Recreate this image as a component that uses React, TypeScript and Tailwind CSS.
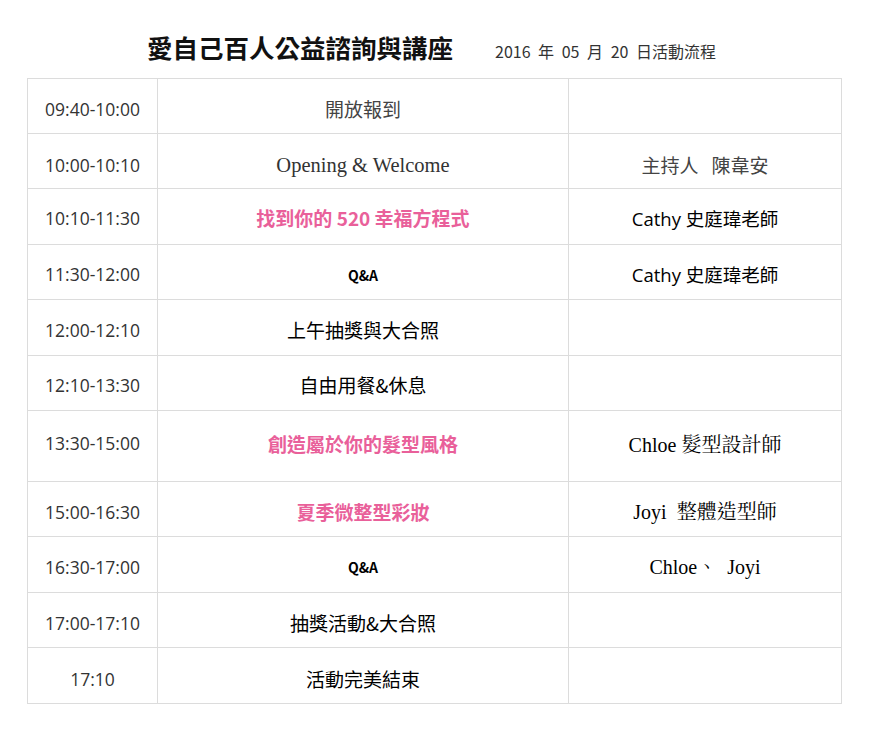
const sans = "font-['Open_Sans','Noto_Sans_CJK_TC',sans-serif]";
const serif = "font-['Liberation_Serif','Noto_Serif_CJK_TC','Noto_Sans_CJK_TC',serif]";
const cjk = "font-['Noto_Sans_CJK_TC',sans-serif]";

type Row = {
  time: string;
  h: string;
  item: React.ReactNode;
  who?: React.ReactNode;
};

const pink = `${cjk} font-bold text-[#e9609a] text-[19px]`;
const plain = `${cjk} text-[19px] text-black`;
const qa = `${cjk} font-bold text-[14px] text-black`;

const rows: Row[] = [
  { time: '09:40-10:00', h: 'h-[55px] pt-[6px]', item: <span className={`${cjk} text-[19px] text-[#444]`}>開放報到</span> },
  {
    time: '10:00-10:10',
    h: 'h-[55px] pt-[8px]',
    item: <span className={`${serif} text-[20.5px] text-[#333]`}>Opening &amp; Welcome</span>,
    who: <span className={`${cjk} text-[19px] text-[#444]`}>主持人&nbsp;&nbsp;&nbsp;陳韋安</span>,
  },
  {
    time: '10:10-11:30',
    h: 'h-[56px] pt-[4px]',
    item: <span className={pink}>找到你的 520 幸福方程式</span>,
    who: <span className={`${sans} text-[18.5px] text-black`}>Cathy 史庭瑋老師</span>,
  },
  {
    time: '11:30-12:00',
    h: 'h-[55px] pt-[5px]',
    item: <span className={qa}>Q&amp;A</span>,
    who: <span className={`${sans} text-[18.5px] text-black`}>Cathy 史庭瑋老師</span>,
  },
  { time: '12:00-12:10', h: 'h-[56px] pt-[5px]', item: <span className={plain}>上午抽獎與大合照</span> },
  { time: '12:10-13:30', h: 'h-[55px] pt-[5px]', item: <span className={plain}>自由用餐&amp;休息</span> },
  {
    time: '13:30-15:00',
    h: 'h-[71px] align-top pt-[19px]',
    item: <span className={pink}>創造屬於你的髮型風格</span>,
    who: <span className={`${serif} text-[20px] text-black`}>Chloe 髮型設計師</span>,
  },
  {
    time: '15:00-16:30',
    h: 'h-[55px] pt-[6px]',
    item: <span className={pink}>夏季微整型彩妝</span>,
    who: <span className={`${serif} text-[20px] text-black`}>Joyi&nbsp;&nbsp;整體造型師</span>,
  },
  {
    time: '16:30-17:00',
    h: 'h-[56px] pt-[5px]',
    item: <span className={qa}>Q&amp;A</span>,
    who: <span className={`${serif} text-[20px] text-black`}>Chloe、&nbsp;&nbsp;Joyi</span>,
  },
  { time: '17:00-17:10', h: 'h-[55px] pt-[6px]', item: <span className={plain}>抽獎活動&amp;大合照</span> },
  { time: '17:10', h: 'h-[56px] pt-[7px]', item: <span className={plain}>活動完美結束</span> },
];

export default function App() {
  return (
    <div className="min-h-screen bg-white pt-[34px] pl-[27px]">
      {/* Title */}
      <div className="flex items-baseline h-[44px] pl-[120px]">
        <h1 className={`${cjk} font-bold text-[25.5px] text-[#111] leading-none`}>愛自己百人公益諮詢與講座</h1>
        <span className={`${cjk} ml-[42px] text-[16px] text-[#333] leading-none [word-spacing:4px]`}>
          2016 年 05 月 20 日活動流程
        </span>
      </div>

      {/* Schedule */}
      <table className="border-collapse w-[814px] table-fixed">
        <colgroup>
          <col className="w-[130px]" />
          <col className="w-[411px]" />
          <col className="w-[273px]" />
        </colgroup>
        <tbody>
          {rows.map((r) => (
            <tr key={r.time + r.h}>
              <td className={`border border-[#dcdcdc] text-center ${r.h} ${sans} text-[17.5px] text-[#333]`}>
                {r.time}
              </td>
              <td className={`border border-[#dcdcdc] text-center ${r.h}`}>{r.item}</td>
              <td className={`border border-[#dcdcdc] text-center ${r.h}`}>{r.who}</td>
            </tr>
          ))}
        </tbody>
      </table>
    </div>
  );
}
